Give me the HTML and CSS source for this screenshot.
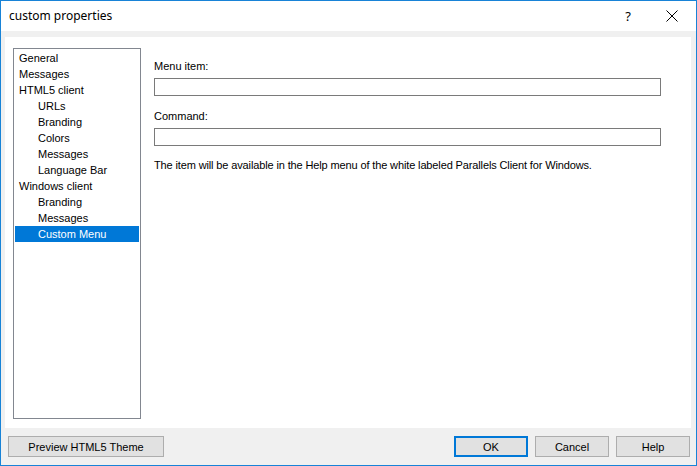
FILE: index.html
```html
<!DOCTYPE html>
<html lang="en">
<head>
    <meta charset="UTF-8">
    <title>custom properties</title>
    <link rel="stylesheet" href="styles.css">
</head>
<body>
    <div class="window">
        <!-- Заголовок окна -->
        <div class="titlebar">
            <div class="title">custom properties</div>
            <div class="title-btn help-btn">?</div>
            <div class="title-btn close-btn">
                <svg width="12" height="12" viewBox="0 0 12 12">
                    <path d="M0.5 0.5 L11.5 11.5 M11.5 0.5 L0.5 11.5" stroke="#000" stroke-width="1" fill="none"/>
                </svg>
            </div>
        </div>

        <div class="main">
            <div class="panel">
                <div class="tree">
                    <div class="item">General</div>
                    <div class="item">Messages</div>
                    <div class="item">HTML5 client</div>
                    <div class="item sub">URLs</div>
                    <div class="item sub">Branding</div>
                    <div class="item sub">Colors</div>
                    <div class="item sub">Messages</div>
                    <div class="item sub">Language Bar</div>
                    <div class="item">Windows client</div>
                    <div class="item sub">Branding</div>
                    <div class="item sub">Messages</div>
                    <div class="item sub selected">Custom Menu</div>
                </div>

                <div class="form">
                    <div class="label">Menu item:</div>
                    <div class="input"></div>
                    <div class="label">Command:</div>
                    <div class="input"></div>
                    <div class="note">The item will be available in the Help menu of the white labeled Parallels Client for Windows.</div>
                </div>
            </div>

            <div class="buttons">
                <div class="btn preview">Preview HTML5 Theme</div>
                <div class="spacer"></div>
                <div class="btn default">OK</div>
                <div class="btn">Cancel</div>
                <div class="btn">Help</div>
            </div>
        </div>
    </div>
</body>
</html>
```

FILE: styles.css
```css
body {
    margin: 0;
    font-family: "Liberation Sans", Arial, sans-serif;
    font-size: 11px;
    color: #000;
    background-color: #f0f0f0;
}

.window {
    width: 697px;
    height: 466px;
    box-sizing: border-box;
    border: 1px solid #1883d7;
    display: flex;
    flex-direction: column;
    background-color: #f0f0f0;
}

/* Заголовок */
.titlebar {
    height: 30px;
    background-color: #fff;
    display: flex;
    align-items: center;
}

.title {
    flex: 1;
    padding-left: 8px;
    font-family: "Noto Sans", sans-serif;
    font-size: 12px;
    padding-bottom: 2px;
}

.title-btn {
    width: 44px;
    height: 30px;
    display: flex;
    align-items: center;
    justify-content: center;
}

.help-btn {
    font-family: "Noto Sans", sans-serif;
    font-size: 13px;
}

.close-btn {
    margin-right: 2px;
}

.main {
    flex: 1;
    display: flex;
    flex-direction: column;
    padding: 6px 5px 0 4px;
}

.panel {
    height: 391px;
    background-color: #fff;
    display: flex;
    padding: 11px 8px 0 8px;
    box-sizing: border-box;
}

/* Дерево слева */
.tree {
    width: 128px;
    height: 371px;
    box-sizing: border-box;
    border: 1px solid #828790;
    padding: 1px;
}

.tree .item {
    height: 16px;
    line-height: 16px;
    padding-left: 4px;
}

.tree .item.sub {
    padding-left: 23px;
}

.tree .item.selected {
    background-color: #0078d7;
    color: #fff;
}

/* Поля справа */
.form {
    flex: 1;
    margin-left: 13px;
    margin-right: 22px;
    padding-top: 11px;
}

.label {
    height: 14px;
    line-height: 14px;
    margin-bottom: 5px;
}

.input {
    height: 18px;
    box-sizing: border-box;
    border: 1px solid #7a7a7a;
    margin-bottom: 13px;
}

.note {
    line-height: 14px;
    margin-top: -1px;
    letter-spacing: -0.13px;
}

/* Кнопки внизу */
.buttons {
    display: flex;
    gap: 7px;
    padding: 8px 1px 0 3px;
}

.spacer {
    flex: 1;
}

.btn {
    width: 74px;
    height: 21px;
    box-sizing: border-box;
    border: 1px solid #adadad;
    background-color: #e1e1e1;
    display: flex;
    align-items: center;
    justify-content: center;
}

.btn.preview {
    width: 156px;
}

.btn.default {
    border: 2px solid #0078d7;
}
```
